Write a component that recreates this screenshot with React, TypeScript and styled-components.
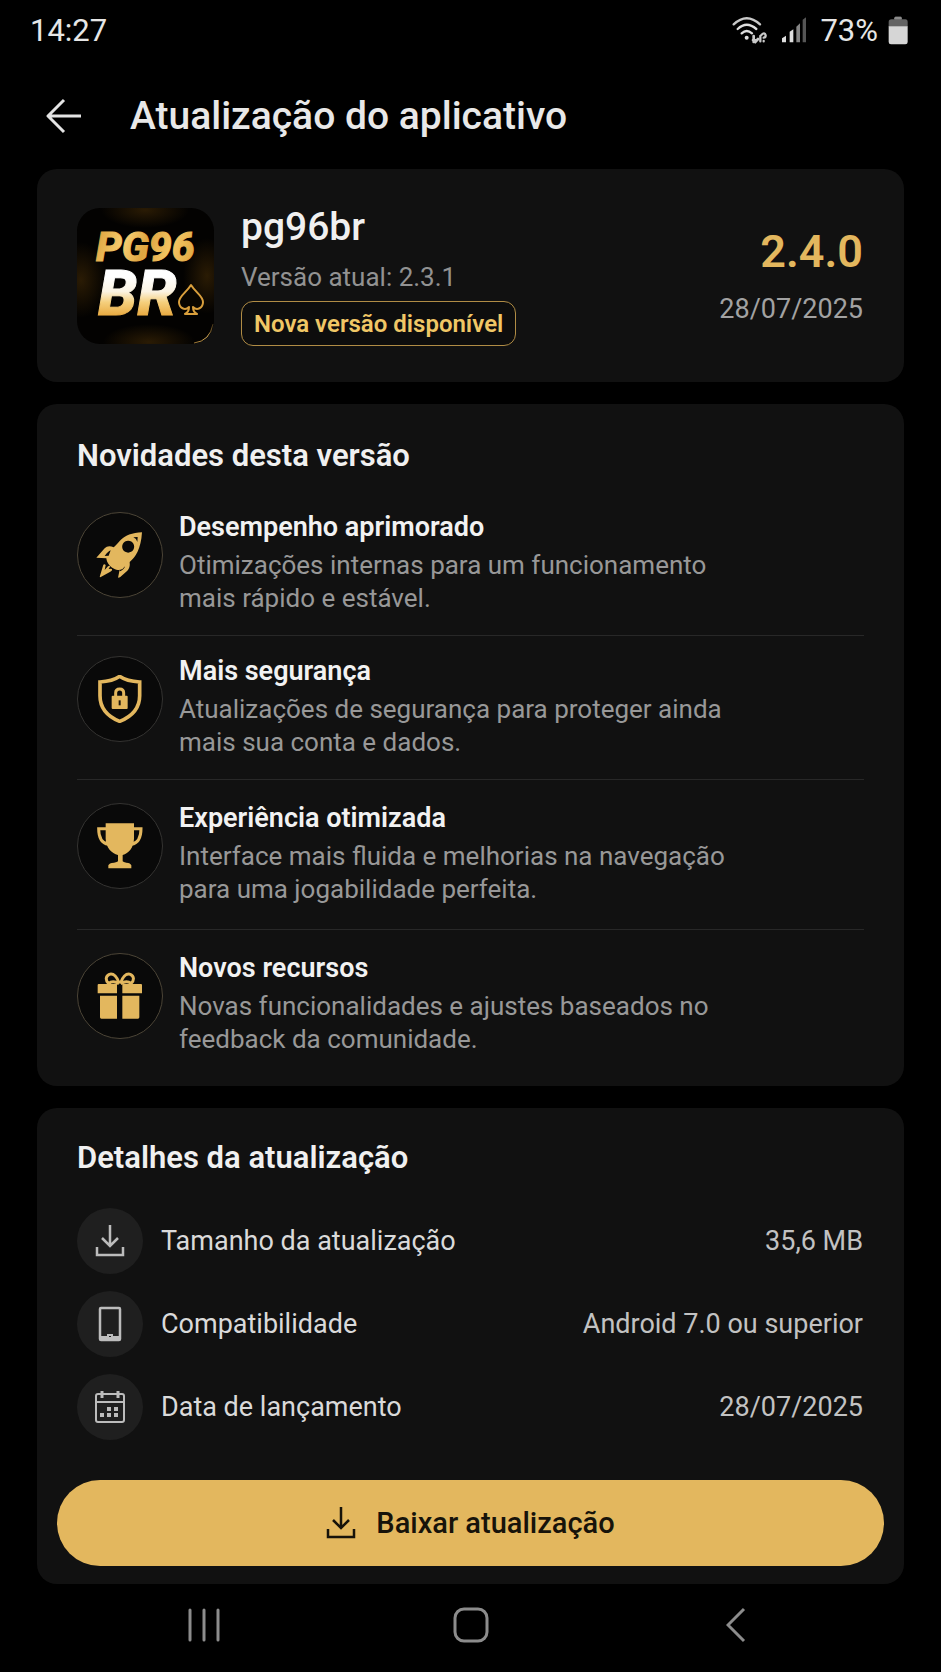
import React from "react";
import styled, { createGlobalStyle } from "styled-components";

const gold = "#e3b75e";

const GlobalStyle = createGlobalStyle`
  *, *::before, *::after { box-sizing: border-box; }
  body {
    margin: 0;
    background: #000;
    color: #e8e8e8;
    font-family: Roboto, "Liberation Sans", sans-serif;
    font-size: 26px;
  }
  h1, h2, h3, p, ul, dl, dd { margin: 0; padding: 0; }
  svg { display: block; flex: none; }
`;

const Page = styled.div`
  min-height: 100vh;
  display: flex;
  flex-direction: column;
`;

const StatusBar = styled.div`
  height: 60px;
  padding: 0 33px 0 30px;
  display: flex;
  align-items: center;
  justify-content: space-between;
  font-size: 31px;
  color: #e6e6e6;
`;

const StatusGroup = styled.div<{ $gap: number }>`
  display: flex;
  align-items: center;
  gap: ${(p) => p.$gap}px;
`;

const Header = styled.header`
  height: 109px;
  padding: 3px 46px 0;
  display: flex;
  align-items: center;
  gap: 48px;
`;

const IconButton = styled.button`
  padding: 0;
  border: 0;
  background: none;
  color: inherit;
  cursor: pointer;
`;

const Title = styled.h1`
  font-size: 39px;
  font-weight: 500;
`;

const Main = styled.main`
  padding: 0 37px;
  display: flex;
  flex-direction: column;
  gap: 22px;
`;

const Card = styled.section`
  border-radius: 20px;
  background: #111;
`;

const AppCard = styled(Card)`
  padding: 36px 41px 36px 40px;
  display: flex;
  align-items: center;
`;

const AppInfo = styled.div`
  flex: 1;
  margin-left: 27px;
`;

const AppName = styled.h2`
  font-size: 39px;
  line-height: 44px;
  font-weight: 500;
  color: #f0f0f0;
`;

const CurrentVersion = styled.p`
  margin: 12px 0 8px;
  line-height: 32px;
  color: #929292;
`;

const Chip = styled.span`
  display: inline-flex;
  align-items: center;
  height: 45px;
  padding: 0 12px;
  border: 1px solid #b08c45;
  border-radius: 12px;
  background: #0d0d0d;
  color: #f0c766;
  font-size: 24px;
  font-weight: 600;
  vertical-align: top;
`;

const Release = styled.div`
  text-align: right;
`;

const NewVersion = styled.p`
  margin-bottom: 15px;
  font-size: 45px;
  line-height: 52px;
  font-weight: 600;
  color: ${gold};
`;

const ReleaseDate = styled.p`
  font-size: 27px;
  line-height: 32px;
  color: #a2a2a2;
`;

const SectionTitle = styled.h2`
  font-size: 31px;
  line-height: 36px;
  font-weight: 600;
  color: #f0f0f0;
`;

const NewsCard = styled(Card)`
  padding: 34px 40px 30px;
`;

const FeatureList = styled.ul`
  margin-top: 18px;
  list-style: none;
`;

const Feature = styled.li<{ $compact?: boolean }>`
  display: flex;
  align-items: flex-start;
  gap: 16px;
  padding: ${(p) => (p.$compact ? 20 : 23)}px 0;

  & + & { border-top: 1px solid #282828; }
  &:last-child { padding-bottom: 0; }
`;

const FeatureIcon = styled.div<{ $ring: string }>`
  flex: none;
  width: 86px;
  height: 86px;
  display: grid;
  place-items: center;
  border: 1px solid ${(p) => p.$ring};
  border-radius: 50%;
  background: #090909;
`;

const FeatureTitle = styled.h3`
  font-size: 27px;
  line-height: 30px;
  font-weight: 600;
  color: #f2f2f2;
`;

const FeatureText = styled.p`
  margin-top: 7px;
  max-width: 560px;
  line-height: 33px;
  color: #989898;
`;

const DetailsCard = styled(Card)`
  padding: 32px 20px 18px;
`;

const DetailsBody = styled.div`
  padding: 0 21px 0 20px;
`;

const DetailList = styled.dl`
  margin: 32px 0 40px;
  display: flex;
  flex-direction: column;
  gap: 17px;
`;

const Detail = styled.div`
  display: flex;
  align-items: center;
`;

const DetailIcon = styled.span`
  width: 66px;
  height: 66px;
  margin-right: 18px;
  display: grid;
  place-items: center;
  border-radius: 50%;
  background: #1f1f1f;
  color: #bcbcbc;
`;

const DetailName = styled.dt`
  flex: 1;
  display: flex;
  align-items: center;
  font-size: 27px;
  color: #dadada;
`;

const DetailValue = styled.dd`
  font-size: 27px;
  color: #c2c2c2;
`;

const DownloadButton = styled.button`
  width: 100%;
  height: 86px;
  display: flex;
  align-items: center;
  justify-content: center;
  gap: 20px;
  border: 0;
  border-radius: 43px;
  background: ${gold};
  color: #17130a;
  font: 500 29px Roboto, "Liberation Sans", sans-serif;
  cursor: pointer;
`;

const NavBar = styled.nav`
  height: 82px;
  padding: 0 187px;
  display: grid;
  grid-template-columns: 1fr auto 1fr;
  align-items: center;
  justify-items: start;
  color: #8c8c8c;

  & > :last-child { justify-self: end; }
`;

const WifiIcon = () => (
  <svg width="36" height="28" viewBox="0 0 108 84" fill="none" stroke="#c9c9c9" strokeWidth="7" strokeLinecap="round">
    <path d="M5 25 Q44 -12 84 25" />
    <path d="M17 39 Q44 14 73 39" stroke="#dedede" />
    <path d="M29 52 Q44 38 60 52" stroke="#dedede" />
    <circle cx="44" cy="65" r="6" fill="#dedede" stroke="none" />
    <path d="M65 60 V78 M63 72 L70 78 L78 69 M66 73 H74" strokeWidth="8" />
    <path d="M85 76 V60 M88 57 Q98 47 101 58 Q101 65 95 65 M95 75 V76" />
  </svg>
);

const SignalIcon = () => (
  <svg width="26" height="26" viewBox="0 0 78 78">
    <path d="M3 76 V64 L15 56 V76Z M26 76 V44 L37 37 V76Z" fill="#dedede" />
    <path d="M46 76 V29 L57 19 V76Z" fill="#858585" />
    <path d="M65 76 V8 L75 1 V76Z" fill="#555" />
  </svg>
);

const BatteryIcon = () => (
  <svg width="20" height="29" viewBox="0 0 60 87">
    <path d="M22 2 H40 V10 H52 Q59 10 59 18 V32 H2 V18 Q2 10 10 10 H20Z" fill="#636363" />
    <path d="M22 2 H38 Q42 2 42 10 H18 Q18 2 22 2Z" fill="#8b8b8b" />
    <path d="M2 31 H59 V78 Q59 85 52 85 H9 Q2 85 2 78Z" fill="#d6d6d6" />
  </svg>
);

const BackArrow = () => (
  <svg width="36" height="36" viewBox="0 0 36 36" fill="none" stroke="#e4e4e4" strokeWidth="3">
    <path d="M35 18 H2 M18 2 L2 18 L18 34" strokeLinejoin="round" />
  </svg>
);

const AppLogo = () => (
  <svg width="137" height="136" viewBox="0 0 137 136" role="img" aria-label="PG96 BR">
    <defs>
      <linearGradient id="pg" gradientUnits="userSpaceOnUse" x1="19" y1="22" x2="116" y2="56">
        <stop offset="0" stopColor="#dca03a" />
        <stop offset="0.3" stopColor="#f7cf72" />
        <stop offset="0.5" stopColor="#dfa440" />
        <stop offset="0.75" stopColor="#f3c765" />
        <stop offset="1" stopColor="#e0a63f" />
      </linearGradient>
      <linearGradient id="br" gradientUnits="userSpaceOnUse" x1="0" y1="59" x2="0" y2="108">
        <stop offset="0.2" stopColor="#fff" />
        <stop offset="0.5" stopColor="#fbf3e2" />
        <stop offset="0.72" stopColor="#f5cf7c" />
        <stop offset="1" stopColor="#e8a93f" />
      </linearGradient>
      <linearGradient id="edge" gradientUnits="userSpaceOnUse" x1="112" y1="136" x2="137" y2="110">
        <stop offset="0" stopColor="#7a5a24" />
        <stop offset="0.5" stopColor="#e0b25a" />
        <stop offset="1" stopColor="#7a5a24" stopOpacity="0.2" />
      </linearGradient>
      <radialGradient id="glow">
        <stop offset="0" stopColor="#5a3a08" stopOpacity="0.45" />
        <stop offset="1" stopColor="#5a3a08" stopOpacity="0" />
      </radialGradient>
      <clipPath id="tile"><rect width="137" height="136" rx="23" /></clipPath>
    </defs>
    <g clipPath="url(#tile)">
      <rect width="137" height="136" fill="#030201" />
      <ellipse cx="68" cy="2" rx="44" ry="18" fill="url(#glow)" />
      <ellipse cx="4" cy="72" rx="26" ry="38" fill="url(#glow)" />
      <ellipse cx="130" cy="68" rx="24" ry="38" fill="url(#glow)" />
      <ellipse cx="72" cy="134" rx="46" ry="18" fill="url(#glow)" />
    </g>
    <path d="M117 135 Q133 133 136 116" fill="none" stroke="url(#edge)" strokeWidth="1" />
    <text fontFamily="Roboto, 'Liberation Sans', sans-serif" fontWeight="800" fontStyle="italic">
      <tspan x="19" y="53" fontSize="41" fill="url(#pg)" stroke="url(#pg)" strokeWidth="1">PG96</tspan>
      <tspan x="21" y="107" fontSize="63" fill="url(#br)" stroke="url(#br)" strokeWidth="1">BR</tspan>
    </text>
    <path
      d="M114 77 C119 85 126 88 126 94 C126 100 120 103 116 99 Q116 104 120 106 H108 Q112 104 112 99 C108 103 102 100 102 94 C102 88 109 85 114 77Z"
      fill="#080500"
      stroke="#d99f3c"
      strokeWidth="2"
      strokeLinejoin="round"
    />
  </svg>
);

const RocketIcon = () => (
  <svg width="48" height="48" viewBox="0 0 144 144" fill={gold}>
    <path
      fillRule="evenodd"
      d="M138 4 C109 5 87 13 71 30 C64 38 57 45 53 49 C43 44 33 44 26 52 L1 80 L31 82 C32 94 42 109 57 115 C62 117 66 117 71 116 L66 140 L72 139 L94 119 Q103 110 101 93 C118 80 135 54 138 4Z M44 58 L38 74 L26 75 Q36 61 44 58Z M97 29 A18 18 0 1 1 96 29Z M112 19 L125 18 L124 33 Q122 23 112 19Z"
    />
    <path d="M71 117 Q82 115 87 106 Q85 115 72 121Z" fill="#090909" />
    <path d="M22 101 Q27 98 29 103 L26 117 L36 106 Q42 102 42 107 L38 114 Q45 112 48 114 Q50 119 43 122 L13 139 Q10 139 12 134Z" />
  </svg>
);

const ShieldIcon = () => (
  <svg width="48" height="48" viewBox="0 0 144 144" fill="none" stroke={gold} strokeWidth="11">
    <path d="M71 4 Q92 19 131 21 V62 C131 98 108 124 71 139 C34 124 12 98 12 62 V21 Q50 19 71 4Z" />
    <rect x="47" y="62" width="48" height="40" rx="3" fill={gold} stroke="none" />
    <path d="M59 64 V54 Q59 42 71 42 Q83 42 83 54 V64" strokeWidth="9" />
    <path d="M71 76 V91" stroke="#1b1509" strokeWidth="6" />
  </svg>
);

const TrophyIcon = () => (
  <svg width="48" height="48" viewBox="0 0 144 144" fill={gold}>
    <path d="M29 4 H114 V50 C113 77 98 94 80 99 V118 Q82 121 91 122 Q104 123 106 130 V139 H37 V130 Q39 123 54 122 Q64 121 66 118 V99 C47 94 30 77 29 50Z" />
    <path d="M30 20 H8 C8 45 17 63 37 67 M113 20 H135 C135 45 126 63 106 67" fill="none" stroke={gold} strokeWidth="9" />
  </svg>
);

const GiftIcon = () => (
  <svg width="48" height="48" viewBox="0 0 144 144" fill={gold}>
    <path d="M8 36 H63 V64 H5 V39 Q5 36 8 36Z M79 36 H135 Q138 36 138 39 V64 H79Z M12 71 H63 V140 H16 Q12 140 12 136Z M79 71 H130 V136 Q130 140 126 140 H79Z" />
    <path d="M70 35 C64 16 53 3 40 7 C28 12 28 26 38 35 Q50 24 69 35 M73 35 C79 16 90 3 103 7 C115 12 115 26 105 35 Q93 24 74 35" fill="none" stroke={gold} strokeWidth="9" />
  </svg>
);

const DownloadIcon = () => (
  <svg width="30" height="32" viewBox="0 0 30 32" fill="none" stroke="currentColor" strokeWidth="2.5">
    <path d="M15 0 V21 M7 13 L15 21 L23 13" />
    <path d="M2 22 V30 H28 V22" />
  </svg>
);

const PhoneIcon = () => (
  <svg width="24" height="36" viewBox="0 0 24 36" fill="none" stroke="currentColor" strokeWidth="2.5">
    <rect x="2" y="2" width="20" height="32" rx="1" />
    <path d="M2 32 H22" strokeWidth="4" />
    <rect x="10" y="29" width="4" height="3" fill="#1f1f1f" strokeWidth="2" />
  </svg>
);

const CalendarIcon = () => (
  <svg width="32" height="34" viewBox="0 0 32 34" fill="none" stroke="currentColor" strokeWidth="2">
    <rect x="2" y="4" width="28" height="28" rx="2" />
    <path d="M2 12 H30" />
    <path d="M8 1 V8 M24 1 V8" strokeWidth="3" />
    <path d="M13 19 H17 M20 19 H24 M6 25 H10 M13 25 H17 M20 25 H24" strokeWidth="4" />
  </svg>
);

const features = [
  {
    icon: <RocketIcon />,
    ring: "#4b4436",
    compact: true,
    title: "Desempenho aprimorado",
    text: "Otimizações internas para um funcionamento mais rápido e estável.",
  },
  {
    icon: <ShieldIcon />,
    ring: "#343331",
    compact: true,
    title: "Mais segurança",
    text: "Atualizações de segurança para proteger ainda mais sua conta e dados.",
  },
  {
    icon: <TrophyIcon />,
    ring: "#343331",
    title: "Experiência otimizada",
    text: "Interface mais fluida e melhorias na navegação para uma jogabilidade perfeita.",
  },
  {
    icon: <GiftIcon />,
    ring: "#4b4436",
    title: "Novos recursos",
    text: "Novas funcionalidades e ajustes baseados no feedback da comunidade.",
  },
];

const details = [
  { icon: <DownloadIcon />, name: "Tamanho da atualização", value: "35,6 MB" },
  { icon: <PhoneIcon />, name: "Compatibilidade", value: "Android 7.0 ou superior" },
  { icon: <CalendarIcon />, name: "Data de lançamento", value: "28/07/2025" },
];

export default function App() {
  return (
    <>
      <GlobalStyle />
      <Page>
        <StatusBar>
          <span>14:27</span>
          <StatusGroup $gap={13}>
            <WifiIcon />
            <SignalIcon />
            <StatusGroup $gap={10}>
              <span>73%</span>
              <BatteryIcon />
            </StatusGroup>
          </StatusGroup>
        </StatusBar>

        <Header>
          <IconButton aria-label="Voltar"><BackArrow /></IconButton>
          <Title>Atualização do aplicativo</Title>
        </Header>

        <Main>
          <AppCard>
            <AppLogo />
            <AppInfo>
              <AppName>pg96br</AppName>
              <CurrentVersion>Versão atual: 2.3.1</CurrentVersion>
              <Chip>Nova versão disponível</Chip>
            </AppInfo>
            <Release>
              <NewVersion>2.4.0</NewVersion>
              <ReleaseDate>28/07/2025</ReleaseDate>
            </Release>
          </AppCard>

          <NewsCard>
            <SectionTitle>Novidades desta versão</SectionTitle>
            <FeatureList>
              {features.map((f) => (
                <Feature key={f.title} $compact={f.compact}>
                  <FeatureIcon $ring={f.ring}>{f.icon}</FeatureIcon>
                  <div>
                    <FeatureTitle>{f.title}</FeatureTitle>
                    <FeatureText>{f.text}</FeatureText>
                  </div>
                </Feature>
              ))}
            </FeatureList>
          </NewsCard>

          <DetailsCard>
            <DetailsBody>
              <SectionTitle>Detalhes da atualização</SectionTitle>
              <DetailList>
                {details.map((d) => (
                  <Detail key={d.name}>
                    <DetailName>
                      <DetailIcon>{d.icon}</DetailIcon>
                      {d.name}
                    </DetailName>
                    <DetailValue>{d.value}</DetailValue>
                  </Detail>
                ))}
              </DetailList>
            </DetailsBody>
            <DownloadButton>
              <DownloadIcon />
              Baixar atualização
            </DownloadButton>
          </DetailsCard>
        </Main>

        <NavBar>
          <IconButton aria-label="Recentes">
            <svg width="34" height="36" viewBox="0 0 34 36" fill="none" stroke="currentColor" strokeWidth="3" strokeLinecap="round">
              <path d="M3 3 V33 M17 3 V33 M31 3 V33" />
            </svg>
          </IconButton>
          <IconButton aria-label="Início">
            <svg width="36" height="38" viewBox="0 0 36 38" fill="none" stroke="currentColor" strokeWidth="3">
              <rect x="2" y="3" width="32" height="32" rx="9" />
            </svg>
          </IconButton>
          <IconButton aria-label="Voltar à tela anterior">
            <svg width="28" height="36" viewBox="0 0 28 36" fill="none" stroke="currentColor" strokeWidth="3">
              <path d="M18 2 L2 18 L18 34" />
            </svg>
          </IconButton>
        </NavBar>
      </Page>
    </>
  );
}
